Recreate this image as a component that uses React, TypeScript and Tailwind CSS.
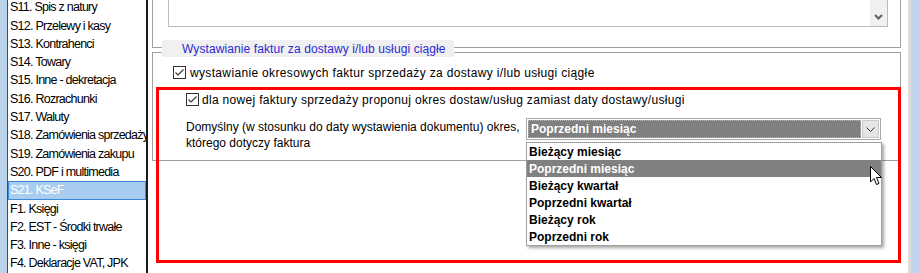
import React from "react";

const listItems = [
  "S11. Spis z natury",
  "S12. Przelewy i kasy",
  "S13. Kontrahenci",
  "S14. Towary",
  "S15. Inne - dekretacja",
  "S16. Rozrachunki",
  "S17. Waluty",
  "S18. Zamówienia sprzedaży",
  "S19. Zamówienia zakupu",
  "S20. PDF i multimedia",
  "S21. KSeF",
  "F1. Księgi",
  "F2. EST - Środki trwałe",
  "F3. Inne - księgi",
  "F4. Deklaracje VAT, JPK",
];

const options = [
  "Bieżący miesiąc",
  "Poprzedni miesiąc",
  "Bieżący kwartał",
  "Poprzedni kwartał",
  "Bieżący rok",
  "Poprzedni rok",
];

function CheckBox() {
  return (
    <svg width="13" height="13" viewBox="0 0 13 13" className="shrink-0">
      <rect x="0.5" y="0.5" width="12" height="12" fill="#fff" stroke="#333" />
      <path d="M2.5 6.5 L5 9 L10.5 3.5" fill="none" stroke="#333" strokeWidth="1.1" />
    </svg>
  );
}

export default function App() {
  return (
    <div
      className="w-[919px] h-[273px] overflow-hidden flex bg-white text-black"
      style={{ fontFamily: '"Liberation Sans", Arial, sans-serif' }}
    >
      <div className="w-[7px] shrink-0 bg-[#bcd3ec]" />
      <div className="w-[141px] shrink-0 bg-white border-l border-[#4a4a4a] border-r-2 border-r-[#1c1c1c] overflow-hidden">
        <div className="-mt-[1.5px] flex flex-col">
          {listItems.map((t) => {
            const sel = t === "S21. KSeF";
            return (
              <div
                key={t}
                className={
                  sel
                    ? "h-[18.3px] flex items-center pl-[1px] bg-[#a9cdf0] border border-[#3a8ad8] text-white text-[12.5px] tracking-[-0.75px] whitespace-nowrap"
                    : "h-[18.3px] flex items-center pl-[2px] text-[12.5px] tracking-[-0.75px] whitespace-nowrap"
                }
              >
                {t}
              </div>
            );
          })}
        </div>
      </div>

      <div className="w-[760px] shrink-0 relative pl-[4px] pr-[7px] text-[12px]">
        {/* upper group */}
        <div className="h-[48px] border-l border-r border-b border-[#a0a0a0]">
          <div className="ml-[15px] w-[720px] h-[27px] border-l border-r border-b border-[#bcbcbc] flex justify-end">
            <div className="w-[17px] h-full bg-[#f0f0f0] flex items-end justify-center pb-[6px]">
              <svg width="9" height="6" viewBox="0 0 9 6">
                <path d="M1 1 L4.5 4.5 L8 1" fill="none" stroke="#606060" strokeWidth="2" />
              </svg>
            </div>
          </div>
        </div>

        {/* group title */}
        <div className="relative z-10 -mt-[8px] ml-[10px] w-[292px] h-[17px] bg-[#f0f0f0] pl-[20px] flex items-center text-[#2a2ad4] tracking-[0.1px] whitespace-nowrap">
          Wystawianie faktur za dostawy i/lub usługi ciągłe
        </div>

        {/* lower group */}
        <div className="-mt-[5px] h-[109px] border border-[#a0a0a0]">
          <div className="mt-[13px] ml-[20px] h-[13px] flex items-center gap-[4px] whitespace-nowrap">
            <CheckBox />
            <span className="tracking-[0.34px]">wystawianie okresowych faktur sprzedaży za dostawy i/lub usługi ciągłe</span>
          </div>
          <div className="mt-[14px] ml-[33px] h-[13px] flex items-center gap-[3px] whitespace-nowrap">
            <CheckBox />
            <span className="tracking-[0.31px]">dla nowej faktury sprzedaży proponuj okres dostaw/usług zamiast daty dostawy/usługi</span>
          </div>
          <div className="mt-[12px] ml-[33px] flex items-start">
            <div className="w-[340px] mt-[1px] leading-[16px]">
              <div className="whitespace-nowrap">Domyślny (w stosunku do daty wystawienia dokumentu) okres,</div>
              <div>którego dotyczy faktura</div>
            </div>
            <div className="relative z-20 w-[355px] h-[22px] border border-[#a8a8a8] bg-white flex p-[1px]">
              <div className="flex-1 bg-[#808080] border border-dotted border-[#b8b8b8] text-white font-bold flex items-center pl-[2px] whitespace-nowrap">
                Poprzedni miesiąc
              </div>
              <div className="w-[17px] ml-[1px] bg-[#e6e6e6] border border-[#c8c8c8] flex items-center justify-center">
                <svg width="9" height="5" viewBox="0 0 9 5">
                  <path d="M0.5 0.5 L4.5 4.5 L8.5 0.5" fill="none" stroke="#333" strokeWidth="1" />
                </svg>
              </div>

              <div className="absolute left-[-1px] top-[23px] w-[356px] bg-white border border-[#a0a0a0] shadow-[2px_2px_3px_rgba(0,0,0,0.35)] flex flex-col">
                {options.map((o) => (
                  <div
                    key={o}
                    className={
                      o === "Poprzedni miesiąc"
                        ? "h-[17px] flex items-center pl-[2px] font-bold bg-[#808080] text-white whitespace-nowrap"
                        : "h-[17px] flex items-center pl-[2px] font-bold text-black whitespace-nowrap"
                    }
                  >
                    {o}
                  </div>
                ))}
              </div>
            </div>
          </div>
        </div>

        {/* red annotation box */}
        <div className="absolute left-[8px] top-[87px] w-[745px] h-[176px] border-[3px] border-[#ff0000] z-10 pointer-events-none" />

        {/* mouse cursor */}
        <svg
          className="absolute left-[722px] top-[166px] z-30"
          width="13"
          height="20"
          viewBox="0 0 13 20"
        >
          <path
            d="M0.5 0.5 L0.5 16 L4 12.5 L6.5 18.5 L9 17.5 L6.5 11.5 L11.5 11.5 Z"
            fill="#fff"
            stroke="#000"
            strokeWidth="1"
            strokeLinejoin="miter"
          />
        </svg>
      </div>

      <div className="w-[3px] shrink-0 bg-[#dcdcdc]" />
      <div className="flex-1 bg-[#bfd5ed]" />
    </div>
  );
}
